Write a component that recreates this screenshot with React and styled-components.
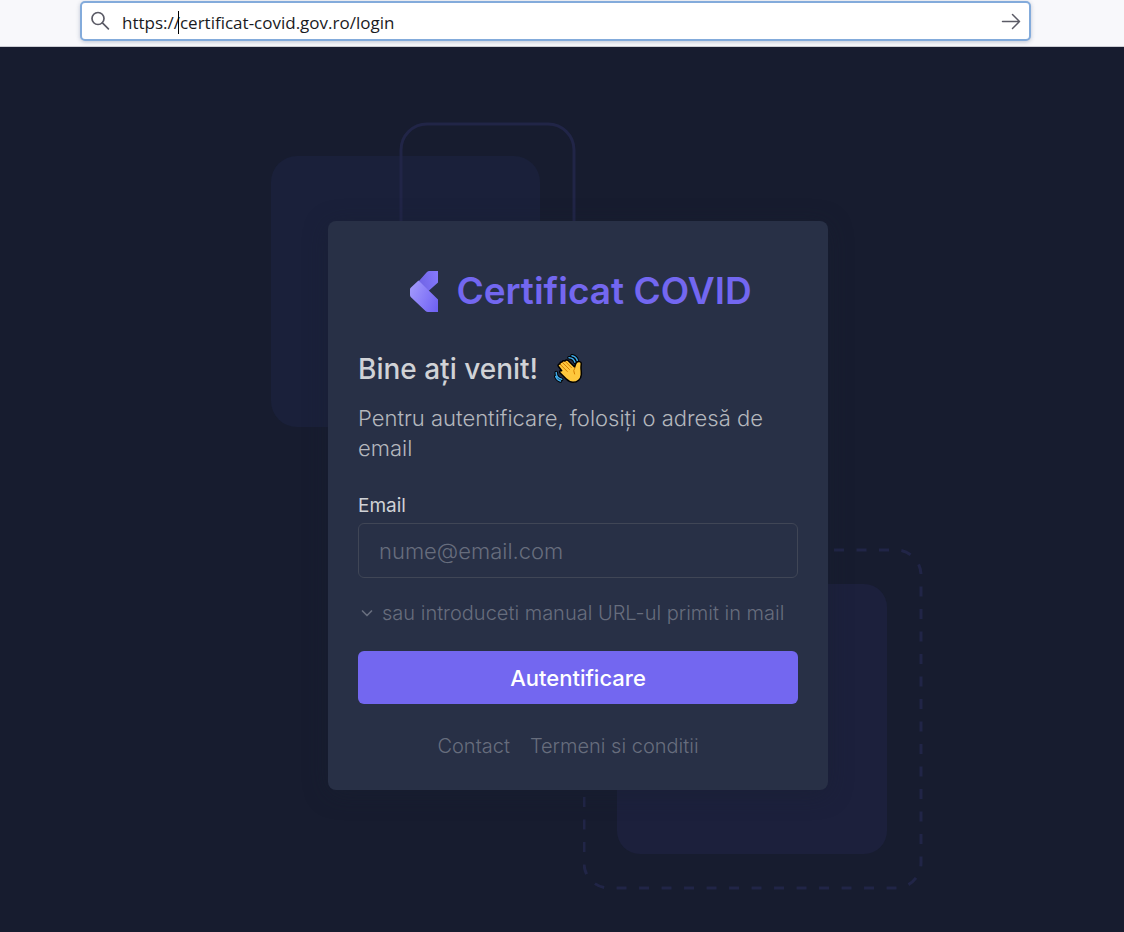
import { useState } from "react"
import styled, { createGlobalStyle } from "styled-components"

const GlobalStyle = createGlobalStyle`
    *, *::before, *::after {
        box-sizing: border-box;
    }
    html, body, #root {
        height: 100%;
    }
    body {
        margin: 0;
        background-color: #171c2f;
        font-family: Inter, "Open Sans", sans-serif;
    }
`

const Page = styled.div`
    min-height: 100%;
    display: flex;
    flex-direction: column;
`

const Toolbar = styled.header`
    height: 47px;
    padding: 1px 93px 5px 80px;
    display: flex;
    background-color: #f8f8fb;
    border-bottom: 1px solid #cccdd4;
`

const AddressBar = styled.form`
    flex: 1;
    position: relative;
    display: flex;
    align-items: center;
    padding: 0 8px;
    background-color: white;
    border: 2px solid #83abdb;
    border-radius: 5px;
    box-shadow: 0 1px 4px rgba(60, 80, 120, 0.3);
`

const AddressInput = styled.input`
    flex: 1;
    min-width: 0;
    margin: 0 12px;
    padding: 3px 0 0;
    border: none;
    outline: none;
    background: none;
    color: #1a1a1e;
    font-family: "Open Sans", "Noto Sans", sans-serif;
    font-size: 17px;
    line-height: 24px;
`

const Caret = styled.span`
    position: absolute;
    left: 96px;
    top: 8px;
    width: 1px;
    height: 23px;
    background-color: black;
`

const GoButton = styled.button`
    display: flex;
    padding: 0;
    border: none;
    background: none;
    cursor: pointer;
`

const Main = styled.main`
    flex: 1;
    display: flex;
    align-items: center;
    justify-content: center;
    padding: 32px 0 0 32px;
    overflow: hidden;
`

const AuthInner = styled.div`
    position: relative;
    width: 100%;
    max-width: 500px;
`

const TopShape = styled.svg`
    position: absolute;
    left: -58px;
    top: -99px;
`

const BottomShape = styled.svg`
    position: absolute;
    right: -95px;
    bottom: -100px;
`

const Card = styled.section`
    position: relative;
    padding: 46px 30px 30px;
    background-color: #283046;
    border-radius: 8px;
    box-shadow: 0 4px 24px rgba(24, 32, 47, 0.4);
`

const Brand = styled.a`
    display: flex;
    align-items: center;
    justify-content: center;
    gap: 18px;
    padding-left: 6px;
    color: #7367f0;
    text-decoration: none;
`

const BrandName = styled.h1`
    margin: 0;
    font-size: 37px;
    font-weight: 600;
    line-height: 48px;
`

const Title = styled.h2`
    display: flex;
    align-items: center;
    gap: 16px;
    margin: 38px 0 0;
    color: #d0d2d6;
    font-size: 28px;
    font-weight: 500;
    line-height: 32px;
`

const Text = styled.p`
    margin: 18px 0 0;
    color: #b4b7bd;
    font-size: 22px;
    font-weight: 300;
    line-height: 30px;
`

const LoginForm = styled.form`
    display: flex;
    flex-direction: column;
    margin-top: 30px;
`

const Label = styled.label`
    color: #d0d2d6;
    font-size: 19px;
    line-height: 26px;
`

const Field = styled.input`
    width: 100%;
    height: 55px;
    margin-top: 4px;
    padding: 0 20px;
    border: 1px solid #404656;
    border-radius: 6px;
    outline: none;
    background-color: #283046;
    color: #b4b7bd;
    font-family: inherit;
    font-size: 22px;
    &::placeholder {
        color: #676d7d;
        font-weight: 300;
        opacity: 1;
    }
`

const ManualButton = styled.button`
    display: flex;
    align-items: center;
    gap: 7px;
    margin-top: 22px;
    padding: 0 1px;
    border: none;
    background: none;
    color: #676d7d;
    font-family: inherit;
    font-size: 20px;
    font-weight: 300;
    line-height: 26px;
    white-space: nowrap;
    cursor: pointer;
`

const SubmitButton = styled.button`
    height: 53px;
    margin-top: 25px;
    border: none;
    border-radius: 6px;
    background-color: #7367f0;
    color: white;
    font-family: inherit;
    font-size: 22px;
    font-weight: 500;
    cursor: pointer;
`

const Links = styled.nav`
    display: flex;
    justify-content: center;
    gap: 20px;
    margin-top: 29px;
    padding-right: 20px;
`

const FooterLink = styled.a`
    color: #676d7d;
    font-size: 20px;
    font-weight: 300;
    line-height: 27px;
    text-decoration: none;
`

const SearchIcon = () => (
    <svg width="20" height="20" viewBox="0 0 20 20" fill="none" stroke="#5b5b66" strokeWidth="1.7" strokeLinecap="round" aria-hidden="true">
        <circle cx="8" cy="7.5" r="6" />
        <path d="M12.4 11.9l6 6" />
    </svg>
)

const ArrowIcon = () => (
    <svg width="20" height="20" viewBox="0 0 20 20" fill="none" stroke="#5b5b66" strokeWidth="1.5" strokeLinecap="round" strokeLinejoin="round" aria-hidden="true">
        <path d="M1.5 10.5h17M11.5 3.5l7 7-7 7" />
    </svg>
)

const ChevronIcon = () => (
    <svg width="16" height="16" viewBox="0 0 16 16" fill="none" stroke="currentColor" strokeWidth="1.7" strokeLinecap="round" strokeLinejoin="round" aria-hidden="true">
        <path d="M3.5 6l4.5 4.5L12.5 6" />
    </svg>
)

const Logo = () => (
    <svg width="28" height="41" viewBox="0 0 28 41" aria-hidden="true">
        <defs>
            <linearGradient id="logoArm" x1="0" y1="0.6" x2="1" y2="0.3">
                <stop offset="0" stopColor="#6f63e4" />
                <stop offset="1" stopColor="#8478fb" />
            </linearGradient>
            <linearGradient id="logoBody" x1="0" y1="0.3" x2="1" y2="0.8">
                <stop offset="0" stopColor="#a097fb" />
                <stop offset="0.5" stopColor="#897df8" />
                <stop offset="1" stopColor="#7063f3" />
            </linearGradient>
        </defs>
        <path d="M19 0h9v11.5L18.5 20 8.5 10.5l8-9Q17.5 0 19 0z" fill="url(#logoArm)" />
        <path d="M8.5 9.5L28 28.5V41H18q-1.5 0-2.5-1L.7 26Q0 25 0 24v-5.5q0-1 .7-1.7z" fill="url(#logoBody)" />
    </svg>
)

const WavingHand = () => (
    <svg width="30" height="30" viewBox="0 0 30 30" role="img" aria-label="👋">
        <g fill="none" strokeLinecap="round">
            <path d="M15 3.7q4.5.2 6 4.5M18 1.7q4.5.8 5.5 5.3M2.2 18.5q0 5.5 5.5 6.8M1.7 22.5q1.3 3.5 4.8 4.5" stroke="#000" strokeWidth="3.4" />
            <path d="M15 3.7q4.5.2 6 4.5M18 1.7q4.5.8 5.5 5.3M2.2 18.5q0 5.5 5.5 6.8M1.7 22.5q1.3 3.5 4.8 4.5" stroke="#3fa9e8" strokeWidth="1.5" />
        </g>
        <path
            d="M4.5 12.5c-1.2-1.2.2-3 1.6-2.2-.8-1.6 1-3 2.2-2 0-1.5 1.7-2.2 2.8-1.1.4-1.4 2-1.7 3-.7l6.5 6.5c.8-2 .8-3.5 2.2-4.8 1.5-1.5 4.6-.6 4.5 1.5-.1 1.5-.3 2.3-.3 4 0 2.5.5 3.5.3 7-.3 4.7-4 7.600-8.300 7.600-3.200 0-5-1.500-7-3.500l-5.800-5.800c-1.300-1.300 0-2.900 1.500-2.200z"
            fill="#ffc83d"
            stroke="#000"
            strokeWidth="1.5"
            strokeLinejoin="round"
        />
        <path d="M6.3 10.5l7 7M8.5 8.5l7 7M11.3 7.5l6.2 6.2" stroke="#d67d00" strokeWidth="1" strokeLinecap="round" />
        <path d="M21 13.5q-2.5 3-.5 6.5" fill="none" stroke="#d67d00" strokeWidth="1" strokeLinecap="round" />
    </svg>
)

const App = () => {
    const [url, setUrl] = useState("https://certificat-covid.gov.ro/login")
    const [email, setEmail] = useState("")

    return (
        <Page>
            <GlobalStyle />
            <Toolbar>
                <AddressBar onSubmit={(e) => e.preventDefault()}>
                    <SearchIcon />
                    <AddressInput aria-label="URL" value={url} onChange={(e) => setUrl(e.target.value)} />
                    <Caret />
                    <GoButton type="submit" aria-label="Go">
                        <ArrowIcon />
                    </GoButton>
                </AddressBar>
            </Toolbar>
            <Main>
                <AuthInner>
                    <TopShape width="306" height="306" viewBox="0 0 306 306" aria-hidden="true">
                        <rect x="1" y="34" width="269" height="271" rx="26" fill="#1a203a" />
                        <rect x="131" y="2" width="173" height="174" rx="26" fill="none" stroke="#212547" strokeWidth="3" />
                    </TopShape>
                    <BottomShape width="340" height="342" viewBox="0 0 340 342" aria-hidden="true">
                        <rect x="34" y="36" width="270" height="270" rx="23" fill="#1c203c" />
                        <rect x="1" y="2" width="337" height="338" rx="25" fill="none" stroke="#212547" strokeWidth="3" strokeDasharray="10 12.5" />
                    </BottomShape>
                    <Card>
                        <Brand href="#">
                            <Logo />
                            <BrandName>Certificat COVID</BrandName>
                        </Brand>
                        <Title>
                            Bine ați venit! <WavingHand />
                        </Title>
                        <Text>Pentru autentificare, folosiți o adresă de email</Text>
                        <LoginForm onSubmit={(e) => e.preventDefault()}>
                            <Label htmlFor="email">Email</Label>
                            <Field
                                id="email"
                                type="email"
                                placeholder="nume@email.com"
                                value={email}
                                onChange={(e) => setEmail(e.target.value)}
                            />
                            <ManualButton type="button">
                                <ChevronIcon />
                                sau introduceti manual URL-ul primit in mail
                            </ManualButton>
                            <SubmitButton type="submit">Autentificare</SubmitButton>
                        </LoginForm>
                        <Links>
                            <FooterLink href="#">Contact</FooterLink>
                            <FooterLink href="#">Termeni si conditii</FooterLink>
                        </Links>
                    </Card>
                </AuthInner>
            </Main>
        </Page>
    )
}

export default App
